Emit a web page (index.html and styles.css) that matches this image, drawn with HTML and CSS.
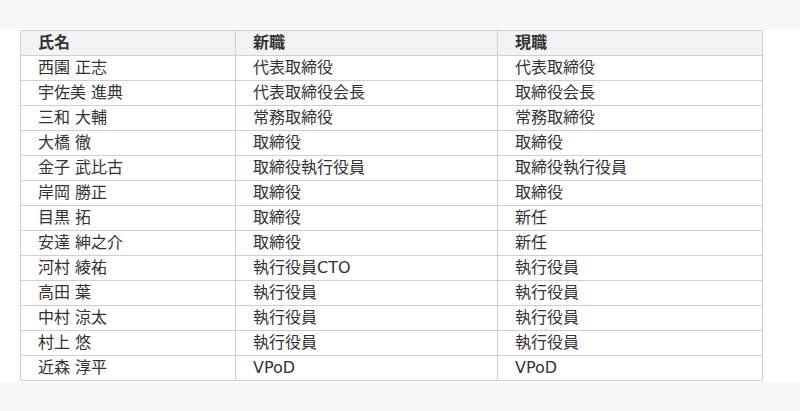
FILE: index.html
```html
<!DOCTYPE html>
<html lang="ja">
<head>
<meta charset="utf-8">
<link rel="stylesheet" href="styles.css">
</head>
<body>
<div class="band">
<table class="officers">
<colgroup><col class="c1"><col class="c2"><col class="c3"></colgroup>
<thead>
<tr><th>氏名</th><th>新職</th><th>現職</th></tr>
</thead>
<tbody>
<tr><td>西園 正志</td><td>代表取締役</td><td>代表取締役</td></tr>
<tr><td>宇佐美 進典</td><td>代表取締役会長</td><td>取締役会長</td></tr>
<tr><td>三和 大輔</td><td>常務取締役</td><td>常務取締役</td></tr>
<tr><td>大橋 徹</td><td>取締役</td><td>取締役</td></tr>
<tr><td>金子 武比古</td><td>取締役執行役員</td><td>取締役執行役員</td></tr>
<tr><td>岸岡 勝正</td><td>取締役</td><td>取締役</td></tr>
<tr><td>目黒 拓</td><td>取締役</td><td>新任</td></tr>
<tr><td>安達 紳之介</td><td>取締役</td><td>新任</td></tr>
<tr><td>河村 綾祐</td><td>執行役員CTO</td><td>執行役員</td></tr>
<tr><td>高田 葉</td><td>執行役員</td><td>執行役員</td></tr>
<tr><td>中村 涼太</td><td>執行役員</td><td>執行役員</td></tr>
<tr><td>村上 悠</td><td>執行役員</td><td>執行役員</td></tr>
<tr><td>近森 淳平</td><td>VPoD</td><td>VPoD</td></tr>
</tbody>
</table>
</div>
</body>
</html>
```

FILE: styles.css
```css
html, body {
  margin: 0;
  padding: 0;
}
body {
  background: #f7f7f7;
  padding: 29px 0 30px;
  font-family: "DejaVu Sans", "Noto Sans CJK JP", sans-serif;
  color: #333;
}
.band {
  background: #fff;
  padding: 1px 0 1px 20px;
}
.officers {
  border-collapse: collapse;
  width: 742px;
  table-layout: fixed;
  font-size: 16px;
}
.officers th, .officers td {
  border: 1px solid #cfcfcf;
  height: 24px;
  padding: 0 0 0 17px;
  text-align: left;
  line-height: 24px;
  vertical-align: middle;
  white-space: nowrap;
  overflow: hidden;
}
.officers th {
  background: #f3f3f3;
  font-weight: bold;
}
.officers .c1 { width: 215px; }
.officers .c2 { width: 262px; }
.officers .c3 { width: 265px; }
```
